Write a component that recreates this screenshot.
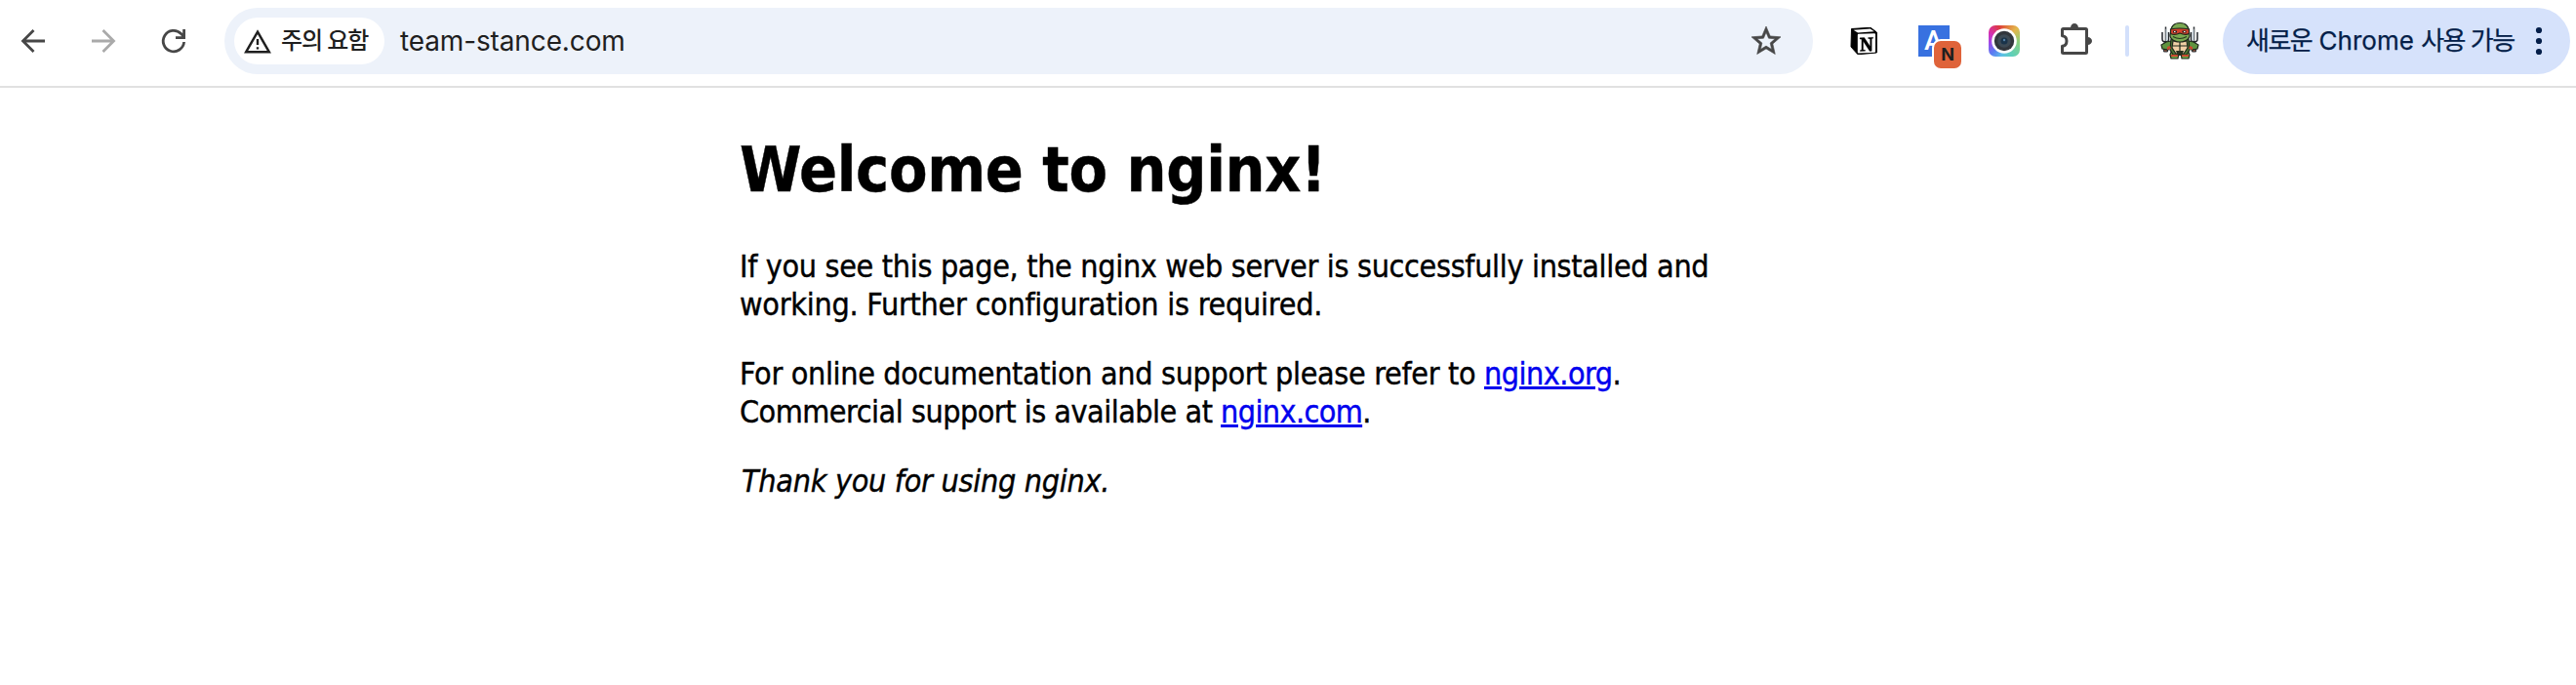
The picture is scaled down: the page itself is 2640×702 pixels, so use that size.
<div class="toolbar">
  <nav class="navigation">
    <span class="slot"><svg width="28" height="28" viewBox="0 0 28 28"><path d="M26 14H4M14.500 3 3.500 14l11 11" fill="none" stroke="#474747" stroke-width="2.800" /></svg></span>
    <span class="slot"><svg width="28" height="28" viewBox="0 0 28 28"><path d="M2 14h22M13.500 3l11 11-11 11" fill="none" stroke="#aaa" stroke-width="2.800" /></svg></span>
    <span class="slot"><svg width="28" height="28" viewBox="0 0 28 28"><path d="M24.600 15A10.700 10.700 0 1 1 21.500 6.500L24.500 9.500M24.600 2v8.600h-8.600" fill="none" stroke="#474747" stroke-width="2.800" /></svg></span>
  </nav>

  <div class="omnibox">
    <div class="chip">
      <svg width="28" height="25" viewBox="0 0 28 25"><path d="M14 2.700 25.800 23.200H2.200Z" fill="none" stroke="#1f1f1f" stroke-width="2.500" /><path d="M14 10v6M14 18.200v2.400" stroke="#1f1f1f" stroke-width="2.400" /></svg>
      <span class="chip-label">주의 요함</span>
    </div>
    <span class="url">team-stance.com</span>
    <svg width="36" height="36" viewBox="0 0 24 24"><path fill="#474747" stroke="#474747" stroke-width=".4" d="M22 9.240l-7.190-.620L12 2 9.190 8.630 2 9.240l5.460 4.730L5.820 21 12 17.270 18.180 21l-1.630-7.030L22 9.240zM12 15.400l-3.760 2.270 1-4.280-3.320-2.880 4.380-.380L12 6.100l1.710 4.040 4.380.380-3.320 2.880 1 4.280L12 15.400z" /></svg>
  </div>

  <div class="extensions">
    <span class="slot">
      <svg width="28" height="28" viewBox="0 0 28 28"><path d="M1.500 1.500 21 .3l6.300 4.700v21L8 27.800 1 20Z" fill="#000" stroke="#000" stroke-linejoin="round" /><path d="M3.500 2.700 20.700 1.600l4 2.700L8 5.400Z" fill="#fff" /><rect x="7.800" y="6.400" width="18.200" height="19.600" rx="1" fill="#fff" transform="skewY(-2) translate(0 .7)" /><path d="M10 10.800l4.600-.3 6 9V11.900l-2-.4v-1l5-.3v1l-1.400.6v12.400l-2 .2-6.700-10.100v8.600l2 .4v1l-5.100.3v-1l1.500-.7V12.200l-1.900-.3Z" fill="#000" stroke="#000" stroke-width=".3" /></svg>
    </span>
    <span class="slot translate">
      <span class="tile">A</span>
      <span class="badge">N</span>
    </span>
    <span class="slot">
      <span class="camera"><svg width="26" height="26" viewBox="0 0 26 26"><circle cx="13" cy="13" r="12.800" fill="#fff" /><circle cx="13" cy="13" r="10.200" fill="#32373d" /><circle cx="13" cy="13" r="6.800" fill="#3d4a55" /><circle cx="13" cy="13" r="3.500" fill="#19334a" /><circle cx="13" cy="12" r="1.200" fill="#5681a5" /></svg></span>
    </span>
    <span class="slot">
      <svg width="40" height="40" viewBox="0 0 40 40"><path d="M8.500 7.500h23q1 0 1 1v23q0 1-1 1h-23q-1 0-1-1v-6.200c2.800-.3 4.500-2.400 4.500-5.300s-1.700-5-4.500-5.300V8.500q0-1 1-1Z" fill="none" stroke="#474747" stroke-width="3" stroke-linejoin="round" /><path d="M16 6.500a4 4.500 0 0 1 8 0ZM33.500 16a4.500 4 0 0 1 0 8Z" fill="#474747" /></svg>
    </span>
  </div>
  <span class="divider"></span>
  <span class="slot">
    <svg width="40" height="40" viewBox="0 0 40 40">
      <path d="M5.500 5.500v17M2 11v7q0 3 3.500 3M8.500 11v8l-3 2M34.500 5.500v17M38 11v7q0 3-3.500 3M31.500 11v8l3 2" fill="none" stroke="#23262b" stroke-width="1.500" />
      <path d="M5.500 7 7.500 11v9h-2ZM34.500 7l-2 4v9h2Z" fill="#cbd5dd" />
      <path d="M3.500 22h4v9h-4ZM32.500 22h4v9h-4Z" fill="#86503c" stroke="#30343a" />
      <g stroke="#1f281c" stroke-width="1.200">
        <path d="M11 20 6 21l-5 3 1 4 6 1 4-5ZM29 20l5 1 5 3-1 4-6 1-4-5Z" fill="#5f9440" />
        <path d="M12 29l-2 5 1 4h7l1-6h2l1 6h7l1-4-2-5Z" fill="#70a846" />
        <path d="M11 18h18l1 11-3 5H13l-3-5Z" fill="#4e7935" />
        <path d="M13 20h14l1 7-4 6h-8l-4-6Z" fill="#f0cfa5" />
        <path d="M20 20v13M13 25h14" />
        <path d="M10.500 12C10.500 5 14 1.500 20 1.500S29.500 5 29.500 12c2 4-2 9-9.500 9s-11.500-5-9.500-9Z" fill="#7aa952" />
        <path d="M10.500 8q9-2 19 0v4.500q-4 2-9.500-.5-5 2.500-9.500.5Z" fill="#d6422d" />
      </g>
      <path d="M13 9.500h4v2h-4ZM22.500 9.500h4v2h-4Z" fill="#1b211f" /><path d="M14 10h1.500v1H14ZM24 10h1.500v1H24Z" fill="#fff" />
      <path d="M13 15.500q7 4 14 0" fill="none" stroke="#26391d" stroke-width="1.200" />
      <path d="M11 34h7v2h-7ZM22 34h7v2h-7ZM10 25l-3 1v3l4-1ZM30 25l3 1v3l-4-1Z" fill="#c94b30" />
      <path d="M16 30h8l-2 5h-4Z" fill="#28301f" />
    </svg>
  </span>
  <div class="update">
    <span class="update-label"><span class="ko">새로운</span> Chrome <span class="ko">사용 가능</span></span>
    <svg width="8" height="30" viewBox="0 0 8 30"><g fill="#041e49"><circle cx="4" cy="4" r="3.100" /><circle cx="4" cy="15" r="3.100" /><circle cx="4" cy="26" r="3.100" /></g></svg>
  </div>
</div>

<main>
  <h1>Welcome to nginx!</h1>
  <p>
    <span class="intro">If you see this page, the nginx web server is successfully installed and</span><br />
    <span class="config">working. Further configuration is required.</span>
  </p>
  <p>
    <span class="docs">For online documentation and support please refer to&nbsp;</span><a href="#org" class="org">nginx.org</a>.<br />
    <span class="support">Commercial support is available at&nbsp;</span><a href="#com" class="com">nginx.com</a>.
  </p>
  <p><em>Thank you for using nginx.</em></p>
</main>

<style>
  :global(body) { margin: 0; background: #fff; }
  .toolbar { display: flex; align-items: center; box-sizing: border-box; width: 2640px; height: 90px; padding: 8px 0 12px; border-bottom: 2px solid #e1e1e1; }
  .navigation, .extensions { display: flex; gap: 4px; }
  .slot { display: flex; align-items: center; justify-content: center; width: 68px; height: 68px; }
  .omnibox { display: flex; align-items: center; box-sizing: border-box; width: 1628px; height: 68px; margin: 0 18px; padding: 0 30px 0 10px; border-radius: 34px; background: #edf2fa; }
  .chip { display: flex; align-items: center; gap: 10px; box-sizing: border-box; width: 154px; height: 48px; padding-left: 10px; border-radius: 24px; background: #fff; }
  .chip-label { font: 500 24px/36px Inter, "Noto Sans CJK KR", sans-serif; color: #1f1f1f; white-space: nowrap; letter-spacing: -1.1px; }
  .url { flex: 1; margin-left: 16px; font: 400 28px/36px Inter, sans-serif; color: #1f1f1f; white-space: nowrap; letter-spacing: -.13px; }
  .translate { position: relative; }
  .tile { width: 32px; height: 32px; background: #3871e0; color: #fff; font: 500 28px/32px Roboto, sans-serif; text-indent: 6px; }
  .badge { position: absolute; left: 34px; top: 34px; width: 28px; height: 28px; border-radius: 7px; background: #df633a; box-shadow: 0 0 0 2px #fff; color: #1f1f1f; font: 700 18px/28px Inter, sans-serif; text-align: center; }
  .camera { display: flex; align-items: center; justify-content: center; width: 32px; height: 32px; border-radius: 7px; background: conic-gradient(#e0663a, #e3b64c 45deg, #8fd07a 90deg, #5fd0b8 150deg, #5cc0e8 190deg, #5b7cf2 225deg, #a445e8 265deg, #d62fb0 300deg, #dc3a40 340deg, #e0663a); }
  .divider { width: 4px; height: 32px; margin: 0 18px; border-radius: 2px; background: #d3e0fb; }
  .update { display: flex; align-items: center; justify-content: space-between; box-sizing: border-box; width: 356px; height: 68px; margin-left: 10px; padding: 0 28px 0 24px; border-radius: 34px; background: #d6e2fb; color: #041e49; }
  .update-label { font: 400 26px/36px Inter, "Noto Sans CJK KR", sans-serif; white-space: nowrap; -webkit-text-stroke: .25px currentColor; }
  .ko { letter-spacing: -1.5px; }
  main { width: 1124px; margin: 46px auto 0; font: 32px/39px "DejaVu Sans Condensed", "DejaVu Sans", sans-serif; font-stretch: condensed; color: #000; white-space: nowrap; -webkit-text-stroke: .4px currentColor; }
  h1 { margin: 0 0 41px; font-size: 64px; line-height: 77px; font-weight: 700; letter-spacing: -.31px; }
  p { margin: 0 0 32px; }
  .intro { letter-spacing: -.32px; }
  .config { letter-spacing: -.24px; }
  .docs { letter-spacing: -.327px; }
  .support { letter-spacing: -.49px; }
  .org { letter-spacing: -.5px; }
  .com { letter-spacing: -.6px; }
  em { padding-left: 2px; letter-spacing: -.27px; }
  a { color: #0000ee; text-decoration: underline; text-decoration-thickness: 3px; }
</style>
